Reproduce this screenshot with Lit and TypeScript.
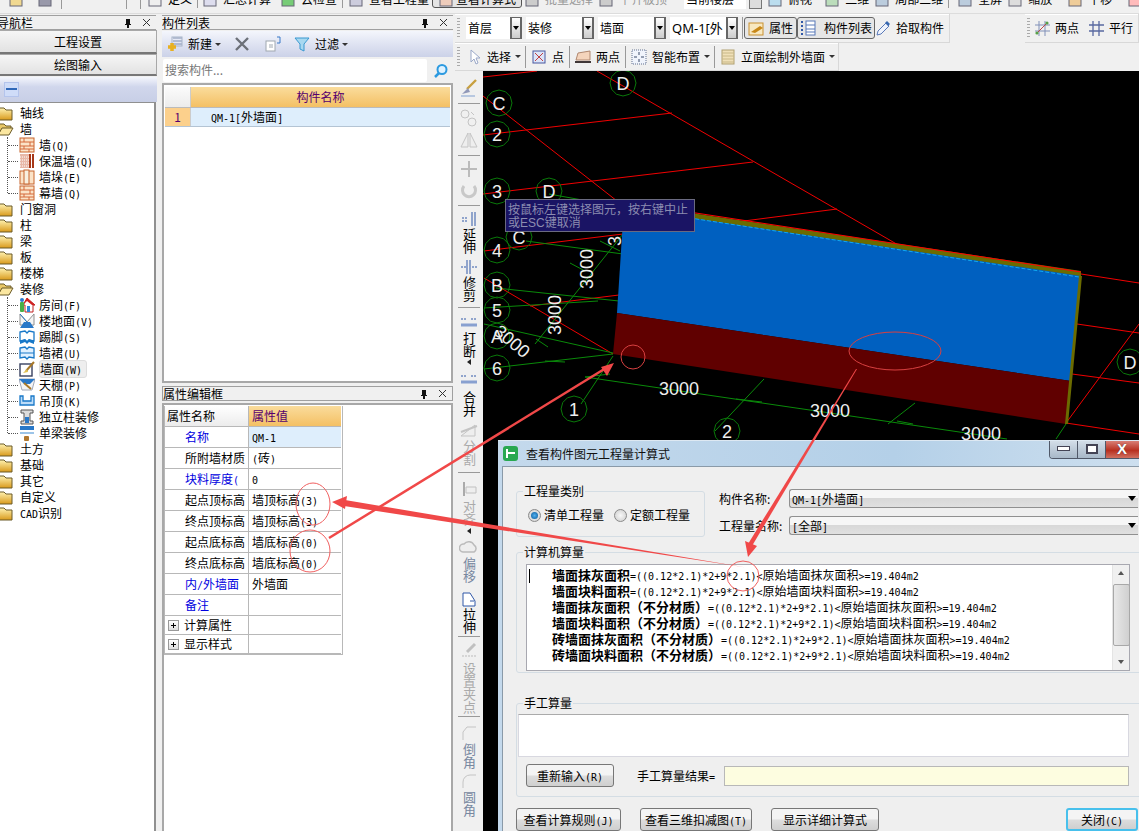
import { LitElement, html, css, svg } from 'lit';
import { customElement } from 'lit/decorators.js';

// latin runs are half width in the original bitmap font, so they get their own span
const mix = (s: string) =>
  s.split(/([\x20-\x7e]+)/).map((p, i) => (i % 2 ? html`<span class="lat">${p}</span>` : p));

const ic = (body: unknown, w = 16, h = 16) =>
  html`<svg class="ic" width=${w} height=${h} viewBox="0 0 16 16">${body}</svg>`;

const folder = ic(svg`<defs><linearGradient id="fg" x1="0" y1="0" x2="0" y2="1"><stop offset="0" stop-color="#fff2b0"/><stop offset="1" stop-color="#d99a1c"/></linearGradient></defs>
  <path d="M0 3h6l2 2h6v10H0z" fill="url(#fg)" stroke="#6b5a28"/>`);
const folderOpen = ic(svg`<path d="M0 3h6l2 2h5v3H4L0 14z" fill="#e8c868" stroke="#6b5a28"/><path d="M4 7h11l-4 7H0z" fill="#fbe7a0" stroke="#6b5a28"/>`);
const brick = ic(svg`<rect x="1" y="1" width="14" height="14" fill="#fbe3c8" stroke="#c8642c"/>
  <path d="M1 5h14M1 9h14M1 12h14M5 1v4M11 5v4M5 9v3M10 12v3" stroke="#d4693a" fill="none"/>`);
const icons: Record<string, unknown> = {
  brick,
  insul: ic(svg`<rect x="1" y="1" width="9" height="14" fill="#e8b8a8"/><path d="M1 4h9M1 7h9M1 10h9M1 13h9" stroke="#fff" stroke-dasharray="1 1"/><path d="M11 1v14M14 1v14" stroke="#a83818" stroke-width="2"/>`),
  pier: ic(svg`<rect x="1" y="2" width="14" height="13" fill="#fbe3c8" stroke="#c8642c"/><rect x="5" y="1" width="5" height="14" fill="#f8f0e0" stroke="#c8642c"/>`),
  room: ic(svg`<path d="M8 1L16 8h-2v7H6V8H4z" fill="#fff" stroke="#c02020"/><path d="M8 1L16 8H13L8 4 4 8z" fill="#d02020"/><rect x="1" y="5" width="4" height="10" rx="1" fill="#48b048"/><circle cx="3" cy="3" r="2" fill="#2878d0"/><rect x="8" y="9" width="3" height="6" fill="#3088d8"/>`),
  floor: ic(svg`<path d="M1 1l7 8 7-8v11H1z" fill="#f4f4f4" stroke="#909090"/><path d="M1 15l4-6h6l4 6z" fill="#2878c8"/><path d="M1 1l7 8" stroke="#2878c8"/>`),
  base: ic(svg`<path d="M1 3l5-1 2 2 2-2 5 1v9l-5-1-2 2-2-2-5 1z" fill="#fff" stroke="#1878c8" stroke-width="1.3"/><path d="M1 12l5-2 2 2 2-2 5 2v3l-5-2-2 2-2-2-5 2z" fill="#1878c8"/>`),
  dado: ic(svg`<path d="M1 3l5-1 2 2 2-2 5 1v10l-5-1-2 2-2-2-5 1z" fill="#e0f0ff" stroke="#1878c8" stroke-width="1.3"/><path d="M1 8h14" stroke="#1878c8"/>`),
  face: ic(svg`<rect x="1" y="3" width="12" height="12" fill="#fff" stroke="#384060" stroke-width="1.4"/><path d="M15 1L7 10" stroke="#a87828" stroke-width="2"/><path d="M8 8L4 12l5-1z" fill="#e0c050"/>`),
  ceil: ic(svg`<path d="M0 2h16l-3 11H3z" fill="#f4f4f4" stroke="#a0a8b8"/><path d="M0 2h16l-5 5H5z" fill="#2878c8"/><path d="M5 6l7 6" stroke="#a87828" stroke-width="2"/>`),
  hang: ic(svg`<path d="M1 3h3v5h8V3h3v9H1z" fill="#bcdcf8" stroke="#1878c8" stroke-width="1.3"/>`),
  col: ic(svg`<path d="M2 1h12v3h-3v8h3v3H2v-3h3V4H2z" fill="#dcdcdc" stroke="#555"/><rect x="6" y="8" width="4" height="6" fill="#2878c8"/>`),
  beam: ic(svg`<rect x="1" y="1" width="14" height="4" fill="#2878c8"/><rect x="1" y="7" width="14" height="2" fill="#9cc4e8"/><rect x="5" y="11" width="5" height="5" rx="1" fill="#b07830"/>`),
  plusDoc: ic(svg`<path d="M6 2h9M6 5h9M6 8h9" stroke="#8090b0" fill="none"/><rect x="5" y="1" width="10" height="9" fill="none" stroke="#a8b4c8"/><path d="M5 7v8M1 11h8" stroke="#e8b020" stroke-width="3.5"/>`),
  cross: ic(svg`<path d="M2 2l12 12M14 2L2 14" stroke="#6c7078" stroke-width="2.4"/>`),
  copy: ic(svg`<rect x="1" y="5" width="9" height="10" fill="#fff" stroke="#a0a8b0"/><path d="M4 9h4M4 11h4" stroke="#a0a8b0"/><path d="M12 1h3v6h-3" fill="none" stroke="#3878c8"/>`),
  filter: ic(svg`<path d="M1 2h14L10 8v7l-4-2V8z" fill="#a8d8f0" stroke="#3898d0"/>`),
  search: ic(svg`<circle cx="9" cy="6.5" r="4.5" fill="#dff2ff" stroke="#2c9ae0" stroke-width="2"/><path d="M6 10l-4 4" stroke="#2c9ae0" stroke-width="2.5"/>`),
  cursor: ic(svg`<path d="M5 1v12l3-3 2 5 2-1-2-5h4z" fill="#fff" stroke="#9aa8c8"/>`),
  point: ic(svg`<rect x="2" y="2" width="12" height="12" fill="#dce4f8" stroke="#4858a0"/><path d="M4 4l8 8M12 4l-8 8" stroke="#c04040"/>`),
  two: ic(svg`<path d="M3 4l12-2v9H1z" fill="#f4d4bc" stroke="#b08870"/><path d="M0 13h16" stroke="#403838" stroke-width="2"/>`),
  smart: ic(svg`<rect x="1" y="1" width="14" height="14" fill="#f0f4fc" stroke="#607090" stroke-dasharray="1 1"/><path d="M8 3v3M8 10v3M3 8h3M10 8h3" stroke="#384868"/>`),
  elev: ic(svg`<rect x="2" y="1" width="12" height="14" fill="#f0e0b8" stroke="#b0a070"/><path d="M2 4h12M2 7h12M2 10h12M2 13h12" stroke="#c8b888"/>`),
  attr: ic(svg`<rect x="1" y="3" width="14" height="12" fill="#f8e8c0" stroke="#c89030"/><path d="M3 12l9-6 3 2-8 5z" fill="#c88818"/>`),
  list: ic(svg`<path d="M1 2h2M1 6h2M1 10h2M1 14h2" stroke="#3058a8" stroke-width="2"/><rect x="6" y="1" width="9" height="14" fill="#fff" stroke="#5878b8"/><path d="M6 5h9M6 9h9M6 12h9" stroke="#5878b8"/>`),
  pick: ic(svg`<path d="M2 15l1-4 8-8 3 3-8 8z" fill="#f0f4fc" stroke="#5878b8"/><path d="M10 3l2-2 3 3-2 2z" fill="#3868b0"/>`),
  gridTwo: ic(svg`<path d="M5 1v15M11 1v15M1 5h15M1 11h15" stroke="#8090b8"/><path d="M2 14L14 2" stroke="#c04848"/><circle cx="3" cy="13" r="1.6" fill="#58a048"/><circle cx="13" cy="3" r="1.6" fill="#58a048"/>`),
  gridPar: ic(svg`<path d="M5 1v15M11 1v15M1 5h15M1 11h15" stroke="#5868a0" stroke-width="1.3"/>`),
};

const strip = (c: string) => ic(svg`<rect x="2" y="1" width="12" height="14" fill=${c} stroke="#667"/><path d="M4 8h8" stroke="#fff"/>`);

// top strip is cut by the window edge: [left margin, icon colour, text, class]
const topItems: [number, string, string, string][] = [
  [6, '#eee', '定义', 'bar'],
  [4, '#dde', '汇总计算', ''],
  [9, '#7c7', '云检查', 'bar'],
  [5, '#ccd', '查看工程量', ''],
  [3, '#ecb', '查看计算式', 'on'],
  [2, '#ccc', '批量选择', 'dim'],
  [5, '#ccc', '平齐板顶', 'dim'],
];
const topRight: [number, string, string, string][] = [
  [5, '#bde', '俯视', ''],
  [12, '#bdb', '二维', ''],
  [5, '#bcd', '局部三维', 'bar'],
  [8, '#bcd', '全屏', ''],
  [5, '#ddd', '缩放', ''],
  [15, '#ec9', '平移', ''],
];

type TreeNode = { t: string; open?: boolean; kids?: [string, string, boolean?][] };
const tree: TreeNode[] = [
  { t: '轴线' },
  { t: '墙', open: true, kids: [['brick', '墙(Q)'], ['insul', '保温墙(Q)'], ['pier', '墙垛(E)'], ['brick', '幕墙(Q)']] },
  { t: '门窗洞' }, { t: '柱' }, { t: '梁' }, { t: '板' }, { t: '楼梯' },
  { t: '装修', open: true, kids: [['room', '房间(F)'], ['floor', '楼地面(V)'], ['base', '踢脚(S)'], ['dado', '墙裙(U)'], ['face', '墙面(W)', true], ['ceil', '天棚(P)'], ['hang', '吊顶(K)'], ['col', '独立柱装修'], ['beam', '单梁装修']] },
  { t: '土方' }, { t: '基础' }, { t: '其它' }, { t: '自定义' }, { t: 'CAD识别' },
];

const props: [string, string, string, string][] = [
  ['名称', 'QM-1', 'blue', 'sel'],
  ['所附墙材质', '(砖)', '', ''],
  ['块料厚度(', '0', 'blue', ''],
  ['起点顶标高', '墙顶标高(3)', '', ''],
  ['终点顶标高', '墙顶标高(3)', '', ''],
  ['起点底标高', '墙底标高(0)', '', ''],
  ['终点底标高', '墙底标高(0)', '', ''],
  ['内/外墙面', '外墙面', 'blue', ''],
  ['备注', '', 'blue', ''],
];

const noMat = '\uFF08不分材质\uFF09';
const formulas: [string, string][] = [
  ['墙面抹灰面积', '墙面抹灰面积'],
  ['墙面块料面积', '墙面块料面积'],
  ['墙面抹灰面积' + noMat, '墙面抹灰面积'],
  ['墙面块料面积' + noMat, '墙面块料面积'],
  ['砖墙面抹灰面积' + noMat, '墙面抹灰面积'],
  ['砖墙面块料面积' + noMat, '墙面块料面积'],
];

const g = (d: unknown) => html`<svg class="ic" width="20" height="20" viewBox="0 0 20 20">${d}</svg>`;
// side toolbar, top to bottom: [height, kind, icon or text, tone]
const side: [number, string, unknown, string?][] = [
  [6, 'gap', null],
  [22, 'icon', g(svg`<path d="M17 2L8 11" stroke="#c8a040" stroke-width="2.4"/><path d="M9 10l-6 6 8-2z" fill="#9098b8"/><path d="M2 18h14" stroke="#80a0d0"/>`)],
  [8, 'sep', null],
  [22, 'icon', g(svg`<circle cx="6" cy="6" r="4" fill="none" stroke="#c4c4c4"/><circle cx="13" cy="14" r="4" fill="none" stroke="#c4c4c4"/><path d="M12 4l3 3" stroke="#c4c4c4"/>`)],
  [22, 'icon', g(svg`<path d="M9 3v14H2zM11 3v14h7z" fill="#eee" stroke="#c4c4c4"/>`)],
  [8, 'sep', null],
  [20, 'icon', g(svg`<path d="M10 2v16M2 10h16" stroke="#bbb" stroke-width="2"/>`)],
  [22, 'icon', g(svg`<path d="M15 6a6.500 6.500 0 1 1-10 0" fill="none" stroke="#c8c8c8" stroke-width="3"/>`)],
  [8, 'sep', null],
  [19, 'icon', g(svg`<path d="M3 9h6M3 12h6" stroke="#3058a8" stroke-dasharray="2 1"/><path d="M13 3v14M16 3v14" stroke="#3058a8"/>`)],
  [27, 'text', '延伸'],
  [3, 'gap', null],
  [18, 'icon', g(svg`<path d="M8 3v14M11 3v14" stroke="#3058a8"/><path d="M2 10h6M13 10h5" stroke="#3058a8" stroke-dasharray="2 1"/>`)],
  [27, 'text', '修剪'],
  [9, 'sep', null],
  [20, 'icon', g(svg`<path d="M2 7h5M12 7h6" stroke="#3058a8" stroke-dasharray="2 1"/><path d="M2 13h16" stroke="#88a0d0" stroke-width="3"/>`)],
  [27, 'text', '打断'],
  [8, 'arr', null],
  [24, 'icon', g(svg`<path d="M2 7h5M12 7h6" stroke="#3058a8" stroke-dasharray="2 1"/><path d="M2 13h16" stroke="#88a0d0" stroke-width="3"/>`)],
  [27, 'text', '合并'],
  [4, 'gap', null],
  [18, 'icon', g(svg`<path d="M2 15h14V4z" fill="#eee" stroke="#c4c4c4"/><path d="M2 11L18 5" stroke="#c4c4c4" stroke-width="2"/>`)],
  [27, 'text', '分割', 'dim'],
  [10, 'sep', null],
  [23, 'icon', g(svg`<path d="M5 3v14" stroke="#aaa" stroke-width="2"/><path d="M7 8h10v6H7z" fill="#eee" stroke="#c0c0c0"/>`)],
  [28, 'text', '对齐', 'dim'],
  [11, 'arr', null],
  [18, 'icon', g(svg`<path d="M4 14a4 4 0 0 1 1-8 6 6 0 0 1 10 1 4 4 0 0 1 0 7z" fill="#eee" stroke="#bbb" stroke-width="1.500"/>`)],
  [27, 'text', '偏移', 'soft'],
  [8, 'gap', null],
  [16, 'icon', g(svg`<path d="M4 3h7l5 8v5H4z" fill="#fff" stroke="#3058a8"/><path d="M11 11h4" stroke="#3058a8"/>`)],
  [26, 'text', '拉伸'],
  [5, 'sep', null],
  [23, 'icon', g(svg`<path d="M16 3L8 11" stroke="#c0c0c0" stroke-width="3"/><path d="M3 15h14" stroke="#bbb" stroke-dasharray="2 1"/>`)],
  [51, 'text', '设置夹点', 'dim'],
  [7, 'sep', null],
  [23, 'icon', g(svg`<path d="M17 5H8L4 10v8" fill="none" stroke="#c4c4c4"/>`)],
  [26, 'text', '倒角', 'soft'],
  [22, 'icon', g(svg`<path d="M17 5h-6a7 7 0 0 0-7 7v6" fill="none" stroke="#c4c4c4"/>`)],
  [30, 'text', '圆角', 'soft'],
];

const bubble = (x: number, y: number, s: string, r = 13) => svg`
  <polygon points=${[...Array(12).keys()].map((i) => {
    const a = (i * Math.PI) / 6;
    return `${x + r * Math.cos(a)},${y + r * Math.sin(a)}`;
  }).join(' ')} fill="none" stroke="#0a7a0a"/>
  <text x=${x} y=${y + 6.500} class="cad" text-anchor="middle">${s}</text>`;

const redLines = [
  [483, 76, 537, 70], [597, 70, 900, 245], [483, 95, 640, 218], [483, 134, 672, 112],
  [483, 193, 753, 161], [736, 221, 837, 208], [484, 250, 623, 233], [530, 305, 619, 294],
  [484, 277, 613, 353], [1081, 273, 1139, 282], [1077, 323, 1139, 332], [1072, 373, 1139, 382],
  [1066, 422, 1139, 433], [1066, 422, 1139, 323],
];
const greenLines = [
  [549, 193, 610, 204], [526, 240, 623, 253], [496, 287, 619, 300], [484, 307, 598, 300],
  [484, 323, 613, 352], [484, 368, 613, 353], [585, 376, 1007, 438], [535, 343, 623, 233],
  [581, 403, 613, 355], [715, 430, 764, 378], [888, 423, 915, 402], [1056, 438, 1066, 423],
];
const ticks = [
  [585, 376, 610, 373], [736, 398, 762, 401], [897, 420, 913, 423], [536, 338, 548, 346],
  [545, 360, 565, 361], [570, 262, 585, 270], [600, 240, 620, 250],
];

@customElement('app-root')
export class AppRoot extends LitElement {
  static styles = css`
    :host {
      display: block;
      position: relative;
      width: 1139px;
      height: 831px;
      overflow: hidden;
      background: #f0f0f0;
      font: 12px/16px "Noto Sans CJK SC", "Liberation Sans", sans-serif;
      color: #000;
    }
    .lat { font: 10px/1 "DejaVu Sans Mono", "Liberation Mono", monospace; }
    .ic { display: block; flex: none; }

    /* window-cut toolbar at the very top */
    .top { display: flex; height: 13px; overflow: hidden; border-bottom: 1px solid #dcdcdc; }
    .top-item { display: flex; flex: none; gap: 5px; margin-top: -11px; height: 19px; align-items: center; white-space: nowrap; box-sizing: border-box; }
    .top-item.dim { color: #999; }
    .top-item.bar { padding-right: 5px; border-right: 1px solid #999; }
    .top-item.on { border: 1px solid #555; border-radius: 3px; background: #e4e4e4; padding: 0 5px; gap: 2px; }
    .top-sep { width: 1px; height: 9px; background: #999; flex: none; }
    .gap-a { margin-left: 8px; }
    .gap-b { margin-left: 64px; }
    .gap-c { margin-left: 13px; }
    .top-combo { width: 62px; height: 9px; background: #fff; margin-left: 17px; flex: none; overflow: hidden; }
    .top-combo span { display: block; margin-top: -9px; padding-left: 2px; }
    .top-arrow { width: 11px; height: 8px; margin-left: 3px; background: #ddd; border: 1px solid #777; border-top: 0; flex: none; }

    .main { display: flex; height: 817px; }

    .title {
      display: flex; align-items: center; height: 13px;
      border: 1px solid #a0a0a0; border-width: 1px 0;
      background: #f0f0f0; white-space: nowrap;
    }
    .title span { flex: 1; }
    .title .pin { flex: none; width: 10px; height: 10px; margin-right: 9px; }
    .title .x { flex: none; width: 9px; height: 9px; margin-right: 5px; }

    /* navigation column */
    .nav { width: 156px; display: flex; flex-direction: column; flex: none; margin-top: 1px; }
    .nav .title { margin-left: -1px; text-indent: -2px; }
    .nav-btn {
      height: 21px; line-height: 21px; text-align: center;
      background: linear-gradient(#f6f6f6, #e2e2e2);
      border: 1px solid #a8a8a8; border-left: 0; border-bottom: 2px solid #777;
      margin-right: -1px;
    }
    .nav-btn + .nav-btn { height: 19px; line-height: 19px; }
    .nav-tool {
      height: 25px; margin-top: 1px; display: flex; align-items: center; padding-left: 4px;
      background: linear-gradient(#f4f6fc 0, #d0d6ec 40%, #c8cfe6 100%);
      margin-right: -1px;
    }
    .nav-tool i { display: block; width: 13px; height: 13px; background: #cfdcf8; border: 1px solid #b4c4ec; position: relative; }
    .nav-tool i::after { content: ""; position: absolute; left: 1px; right: 1px; top: 5px; height: 2px; background: #3068b8; }
    .tree { flex: 1; background: #fff; border: 1px solid #909090; border-width: 1px 2px 0 0; padding-top: 2px; }
    .row { display: flex; align-items: center; height: 16px; gap: 6px; white-space: nowrap; }
    .row .ic { margin-left: -2px; }
    .kids { position: relative; padding-left: 19px; }
    .kids::before { content: ""; position: absolute; left: 7px; top: 0; bottom: 8px; border-left: 1px dotted #555; }
    .kid { position: relative; display: flex; align-items: center; height: 16px; gap: 4px; white-space: nowrap; }
    .kid::before { content: ""; position: absolute; left: -11px; width: 10px; top: 8px; border-top: 1px dotted #555; }
    .kid b { font-weight: 400; }
    .kid.hl b { background: #eee; border: 1px solid #ddd; border-radius: 3px; padding: 0 4px 0 0; margin: -1px 0; }

    /* component list + property column */
    .mid { width: 291px; margin-left: 6px; flex: none; display: flex; flex-direction: column; margin-top: 1px; }
    .mid-tool {
      height: 26px; margin-top: 1px; display: flex; align-items: center; padding-left: 5px; gap: 5px;
      background: linear-gradient(#f4f6fc 0, #dfe3f2 50%, #ccd2e8 100%);
    }
    .drop { width: 0; height: 0; border: 3px solid transparent; border-top: 3px solid #333; border-bottom: 0; margin-left: -2px; }
    .search { display: flex; height: 25px; margin-top: 1px; align-items: center; border-bottom: 1px solid #aaa; }
    .search div { width: 264px; height: 23px; line-height: 22px; background: #fff; border-radius: 2px; color: #777; padding-left: 2px; box-sizing: border-box; margin-left: 1px; }
    .search svg { margin-left: 6px; }
    .list { height: 299px; background: #fff; border: 2px solid #a8a8a8; border-top: 1px solid #a8a8a8; padding: 2px 1px 0; box-sizing: border-box; }
    .list-head { display: flex; height: 20px; line-height: 20px; border-bottom: 1px solid #bbb; }
    .list-head i { width: 25px; background: linear-gradient(#fbfbfb, #ececec); border-right: 1px solid #ccc; }
    .list-head b { flex: 1; font-weight: 400; text-align: center; color: #56006e; background: linear-gradient(#fadc9c, #f4c064); }
    .list-row { display: flex; height: 18px; line-height: 18px; border-bottom: 1px solid #b4c4d4; }
    .list-row i { width: 25px; font-style: normal; text-align: center; background: #fcd08c; color: #56006e; border-right: 1px solid #ccc; }
    .list-row b { flex: 1; font-weight: 400; background: #deeefc; padding-left: 20px; }
    .mid .prop-title { margin-top: 3px; border: 1px solid #a0a0a0; }
    .prop { flex: 1; margin-top: 2px; background: #fff; border: 2px solid #a8a8a8; border-bottom: 0; padding-top: 1px; }
    .grid { display: grid; grid-template-columns: 84px 93px; width: 178px; border: 1px solid #b8b8b8; border-width: 0 1px 1px 0; }
    .cell { height: 20px; line-height: 20px; border: 1px solid #b8b8b8; border-width: 0 0 1px 1px; white-space: nowrap; overflow: hidden; padding-left: 20px; }
    .cell.v { padding-left: 3px; }
    .cell.h { padding-left: 2px; background: linear-gradient(#fff, #ececec); }
    .cell.hv { padding-left: 3px; background: linear-gradient(#fadc9c, #f4c064); color: #56006e; }
    .cell.blue { color: #0000e0; }
    .cell.sel { background: #deeefc; }
    .cell.fold { height: 18px; line-height: 18px; display: flex; align-items: center; padding-left: 3px; gap: 5px; }
    .plus { width: 9px; height: 9px; border: 1px solid #999; background: linear-gradient(#fff, #ddd); position: relative; }
    .plus::before { content: ""; position: absolute; left: 2px; right: 2px; top: 4px; height: 1px; background: #000; }
    .plus::after { content: ""; position: absolute; top: 2px; bottom: 2px; left: 4px; width: 1px; background: #000; }

    /* drawing side */
    .work { flex: 1; margin-left: 2px; display: flex; flex-direction: column; min-width: 0; }
    .bars { display: flex; height: 29px; }
    .band { display: flex; align-items: center; background: #f0f0f0; border: 1px solid #d8d8d8; border-width: 0 1px 1px 0; box-shadow: inset 0 1px 0 #fff; height: 28px; flex: none; }
    .grip { width: 3px; height: 20px; margin: 0 6px 0 2px; background: repeating-linear-gradient(#aaa 0 1px, transparent 1px 3px); flex: none; }
    .combo { display: flex; height: 22px; margin-right: 4px; flex: none; }
    .combo span { background: #fff; line-height: 22px; padding-left: 2px; box-sizing: border-box; white-space: nowrap; overflow: hidden; }
    .combo i { width: 12px; box-sizing: border-box; border: 1px solid #666; border-width: 1px 2px; background: linear-gradient(#fff, #ccc); display: flex; align-items: center; justify-content: center; }
    .combo i::after { content: ""; border: 3px solid transparent; border-top: 4px solid #000; border-bottom: 0; }
    .w44 { width: 44px; }
    .w56 { width: 56px; }
    .qm { font: 13px/22px "Noto Sans", "Noto Sans CJK SC", sans-serif; }
    .vsep { width: 1px; height: 22px; background: #999; flex: none; }
    .vsep.wide { margin-right: 1px; }
    .press { display: flex; align-items: center; gap: 5px; height: 20px; padding: 0 3px; border: 1px solid #666; border-radius: 3px; background: #e6e6e6; flex: none; }
    .press + .press { padding: 0 2px; gap: 8px; }
    .plain { display: flex; align-items: center; gap: 5px; flex: none; white-space: nowrap; }
    .pick-item { margin: 0 5px 0 0; }
    .par-band { margin-left: 75px; flex: 1; }
    .par-band .grip { margin-right: 3px; }
    .par-first { margin: 0 9px 0 1px; }
    .band2 { height: 27px; width: 383px; }
    .band2 .grip { margin-right: 1px; }
    .band2 .plain { padding: 0 5px; }
    .band2 .plain .drop { margin: 0 -1px 0 -1px; }

    .below { flex: 1; display: flex; min-height: 0; }
    .vbar { width: 28px; flex: none; display: flex; flex-direction: column; align-items: center; background: #f0f0f0; overflow: hidden; }
    .vbar > * { flex: none; }
    .v-icon { display: flex; align-items: center; justify-content: center; width: 100%; }
    .v-sep { display: flex; align-items: center; width: 22px; }
    .v-sep::after { content: ""; flex: 1; height: 1px; background: #999; }
    .v-text { writing-mode: vertical-rl; text-orientation: upright; font-size: 13px; line-height: 14px; white-space: nowrap; }
    .v-text.dim { color: #aaa; }
    .v-text.soft { color: #7888a0; }
    .v-arr { display: flex; justify-content: center; }
    .v-arr::after { content: ""; border: 3px solid transparent; border-right: 4px solid #222; border-left: 0; height: 0; }
    .canvas { flex: 1; background: #000; position: relative; overflow: hidden; }
    .canvas svg { display: block; }
    .cad { font: 18px "Liberation Sans", sans-serif; fill: #eee; }
    .tip {
      position: absolute; left: 22px; top: 128px; width: 186px; height: 29px;
      background: #1a1464; border: 1px solid #6a6a80; color: #8c8cb0;
      line-height: 13px; padding: 2px 0 0 2px; white-space: nowrap;
    }
    .tip .lat { font: 12px/1 "Liberation Sans", sans-serif; }

    /* dialog floating over the canvas */
    .dialog {
      position: absolute; left: 498px; top: 440px; width: 660px; height: 391px;
      background: linear-gradient(90deg, #c4d9ec, #b4d0e8 60%, #cfe0ef);
      border-top: 1px solid #dde8f2; box-sizing: border-box; overflow: hidden;
    }
    .dlg-top { display: flex; align-items: center; height: 25px; padding-left: 5px; gap: 8px; color: #111; }
    .dlg-logo { width: 15px; height: 15px; border-radius: 3px; background: #28a850; position: relative; flex: none; }
    .dlg-logo::before { content: ""; position: absolute; left: 3px; top: 3px; bottom: 3px; width: 2px; background: #fff; }
    .dlg-logo::after { content: ""; position: absolute; left: 5px; right: 3px; top: 6px; height: 2px; background: #fff; }
    .winbtns { position: absolute; top: -2px; left: 551px; display: flex; height: 19px; border: 1px solid #505868; border-top: 0; border-radius: 0 0 0 4px; overflow: hidden; }
    .winbtns div { display: flex; align-items: center; justify-content: center; background: linear-gradient(#d8e2ec, #a8b8c8); border-right: 1px solid #505868; width: 27px; }
    .winbtns div:nth-child(3) { width: 50px; justify-content: flex-start; padding-left: 11px; box-sizing: border-box; background: linear-gradient(#e09088, #b83020 60%, #d07060); border: 0; }
    .winbtns em { font: 700 15px/1 "Liberation Sans", sans-serif; color: #fff; text-shadow: 0 0 1px #333; }
    .min { width: 11px; height: 3px; background: #fff; border: 1px solid #445; }
    .max { width: 8px; height: 6px; background: #fff; border: 2px solid #445; }
    .dlg-body { margin-left: 4px; height: 366px; background: #efefef; border: 1px solid #8a9aa8; border-width: 1px 0 0 1px; box-sizing: border-box; padding: 24px 0 0 13px; }
    .r1 { display: flex; height: 46px; }
    .group { border: 1px solid #d4dde4; border-radius: 3px; box-sizing: border-box; }
    .legend { display: block; width: fit-content; background: #efefef; margin: -8px 0 0 6px; padding: 0 1px; line-height: 14px; }
    .kind { width: 189px; flex: none; }
    .radios { display: flex; align-items: center; margin: 9px 0 0 11px; white-space: nowrap; }
    .radio { width: 11px; height: 11px; border-radius: 50%; border: 1px solid #8a8a8a; background: radial-gradient(#f8f8f8, #ccc); margin-right: 3px; position: relative; flex: none; }
    .radio.on::after { content: ""; position: absolute; inset: 2px; border-radius: 50%; background: radial-gradient(#50b0f0, #085898); }
    .radios span + .radio { margin-left: 10px; }
    .fields { margin-left: 14px; flex: none; width: 470px; margin-top: -2px; }
    .field { display: flex; align-items: center; height: 19px; margin-bottom: 8px; white-space: nowrap; }
    .field label { width: 70px; flex: none; }
    .sel-box { display: flex; align-items: center; justify-content: space-between; width: 349px; height: 19px; line-height: 18px; padding: 0 2px; box-sizing: border-box; border: 1px solid #909090; border-right: 0; border-radius: 3px 0 0 3px; background: linear-gradient(#f6f6f6 45%, #d8d8d8 50%, #e0e0e0); }
    .sel-box::after { content: ""; border: 4px solid transparent; border-top: 5px solid #000; border-bottom: 0; }
    .calc { margin-top: 15px; height: 121px; width: 660px; }
    .textbox { display: flex; width: 604px; height: 107px; margin: 5px 0 0 9px; background: #fff; border: 1px solid #a8a8b0; box-sizing: border-box; position: relative; }
    .lines { flex: 1; padding: 2px 0 0 25px; white-space: nowrap; }
    .lines div { height: 16px; line-height: 16px; }
    .lines b { font-size: 13px; font-weight: 700; }
    .caret { position: absolute; left: 2px; top: 4px; width: 1px; height: 14px; background: #000; }
    .scroll { width: 17px; flex: none; background: #f0f0f0; border-left: 1px solid #e4e4e4; display: flex; flex-direction: column; align-items: center; justify-content: space-between; padding: 6px 0; box-sizing: border-box; position: relative; }
    .scroll i { border: 3px solid transparent; }
    .scroll i.up { border-bottom: 4px solid #555; border-top: 0; }
    .scroll i.dn { border-top: 4px solid #555; border-bottom: 0; }
    .thumb { position: absolute; top: 19px; left: 0; width: 15px; height: 60px; background: linear-gradient(90deg, #e8e8e8, #d0d0d0); border: 1px solid #a8a8a8; border-radius: 2px; }
    .manual { margin-top: 30px; height: 94px; width: 660px; }
    .manual .area { width: 611px; height: 43px; margin: 4px 0 0 1px; background: #fff; border: 1px solid #d8d8e0; border-top-color: #aaa; box-sizing: border-box; }
    .manual .foot { display: flex; align-items: center; margin: 7px 0 0 9px; }
    .btn { height: 23px; line-height: 21px; box-sizing: border-box; text-align: center; border: 1px solid #777; border-radius: 3px; background: linear-gradient(#f4f4f4 45%, #dcdcdc 55%, #cfcfcf); white-space: nowrap; flex: none; }
    .btn.go { border: 2px solid #48c0ec; line-height: 19px; }
    .foot > span { margin-left: 23px; }
    .foot u { display: block; width: 405px; height: 20px; background: #fdfde0; border: 1px solid #b8b8b8; box-sizing: border-box; margin-left: 9px; text-decoration: none; }
    .btm { display: flex; margin-top: 11px; }
    .b88 { width: 88px; }
    .b105 { width: 105px; }
    .b112 { width: 112px; margin-left: 19px; }
    .b108 { width: 108px; margin-left: 19px; }
    .b72 { width: 72px; margin-left: 187px; }

    .notes { position: absolute; left: 0; top: 0; pointer-events: none; }
  `;

  private renderTop() {
    return html`<div class="top">
      <div class="top-item"><span class="gap-a">${strip('#f0d890')}</span></div>
      <div class="top-item"><span class="gap-c">${strip('#99a')}</span></div>
      <div class="top-sep gap-a"></div>
      <div class="top-sep gap-b"></div>
      <div class="top-sep gap-c"></div>
      ${topItems.map(
        ([m, c, t, cls]) => html`<div class="top-item ${cls}" style="margin-left:${m}px">${strip(c)}<span>${t}</span></div>`
      )}
      <div class="top-combo"><span>当前楼层</span></div>
      <div class="top-arrow"></div>
      ${topRight.map(
        ([m, c, t, cls]) => html`<div class="top-item ${cls}" style="margin-left:${m}px">${strip(c)}<span>${t}</span></div>`
      )}
      <div class="top-item" style="margin-left:15px">${strip('#fbb')}</div>
    </div>`;
  }

  private renderTree() {
    return html`<div class="tree">
      ${tree.map(
        (n) => html`<div class="row">${n.open ? folderOpen : folder}<span>${mix(n.t)}</span></div>
          ${n.kids
            ? html`<div class="kids">
                ${n.kids.map(
                  ([i, t, hl]) => html`<div class="kid ${hl ? 'hl' : ''}">${icons[i]}<b>${mix(t)}</b></div>`
                )}
              </div>`
            : ''}`
      )}
    </div>`;
  }

  private titleBar(t: string, cls = '') {
    return html`<div class="title ${cls}">
      <span>${t}</span>
      <svg class="pin" viewBox="0 0 10 10"><path d="M3 1h4v5h1v1H6v3H4V7H2V6h1z" fill="#111"/></svg>
      <svg class="x" viewBox="0 0 9 9"><path d="M1 1l7 7M8 1L1 8" stroke="#333"/></svg>
    </div>`;
  }

  private renderSide() {
    return html`<div class="vbar">
      ${side.map(([h, kind, v, tone]) => {
        if (kind === 'icon') return html`<div class="v-icon" style="height:${h}px">${v}</div>`;
        if (kind === 'sep') return html`<div class="v-sep" style="height:${h}px"></div>`;
        if (kind === 'arr') return html`<div class="v-arr" style="height:${h}px"></div>`;
        if (kind === 'text') return html`<div class="v-text ${tone ?? ''}" style="height:${h}px">${v}</div>`;
        return html`<div style="height:${h}px"></div>`;
      })}
    </div>`;
  }

  private renderCad() {
    const line = (l: number[]) => svg`<line x1=${l[0]} y1=${l[1]} x2=${l[2]} y2=${l[3]} />`;
    return html`<div class="canvas">
      <svg width="656" height="761" viewBox="483 70 656 761">
        <g stroke="#f00000" stroke-width="1">${redLines.map(line)}</g>
        <g stroke="#0a8a0a" stroke-width="1">${greenLines.map(line)}${ticks.map(line)}</g>
        <polygon points="624,204 1081,273 1071,380 617,312" fill="#0060c0" />
        <polygon points="617,312 1071,380 1066,423 613,353" fill="#600000" />
        <polygon points="624,202 1081,270 1081,275 624,207" fill="#6b6b00" />
        <line x1="624" y1="201" x2="1081" y2="271" stroke="#f00" />
        <line x1="624" y1="207" x2="1079" y2="276" stroke="#10a8f0" stroke-dasharray="4 2" />
        <polygon points="1079,275 1082,275 1068,423 1065,423" fill="#6b6b00" />
        ${bubble(623, 82, 'D')} ${bubble(499, 102, 'C')} ${bubble(497, 133, '2')} ${bubble(497, 190, '3')}
        ${bubble(549, 190, 'D')} ${bubble(519, 236, 'C')} ${bubble(497, 249, '4')} ${bubble(497, 284, 'B')}
        ${bubble(497, 309, '5')} ${bubble(497, 335, 'A')} ${bubble(497, 367, '6')} ${bubble(574, 408, '1')}
        ${bubble(727, 430, '2')} ${bubble(1130, 361, 'D')}
        <text class="cad" x="679" y="394" text-anchor="middle">3000</text>
        <text class="cad" x="830" y="416" text-anchor="middle">3000</text>
        <text class="cad" x="981" y="439" text-anchor="middle">3000</text>
        <text class="cad" text-anchor="middle" transform="translate(593,268) rotate(-90)">3000</text>
        <text class="cad" text-anchor="middle" transform="translate(561,314) rotate(-90)">3000</text>
        <text class="cad" text-anchor="middle" transform="translate(508,345) rotate(40)">3000</text>
        <text class="cad" text-anchor="middle" transform="translate(621,240) rotate(-90)">3</text>
      </svg>
      <div class="tip">按鼠标左键选择图元\uFF0C按右键中止<br />或<span class="lat">ESC</span>键取消</div>
    </div>`;
  }

  private renderDialog() {
    return html`<div class="dialog">
      <div class="dlg-top"><div class="dlg-logo"></div>查看构件图元工程量计算式</div>
      <div class="winbtns">
        <div><i class="min"></i></div>
        <div><i class="max"></i></div>
        <div><em>X</em></div>
      </div>
      <div class="dlg-body">
        <div class="r1">
          <div class="group kind">
            <span class="legend">工程量类别</span>
            <div class="radios">
              <i class="radio on"></i><span>清单工程量</span>
              <i class="radio"></i><span>定额工程量</span>
            </div>
          </div>
          <div class="fields">
            <div class="field"><label>构件名称:</label><div class="sel-box"><span>${mix('QM-1[外墙面]')}</span></div></div>
            <div class="field"><label>工程量名称:</label><div class="sel-box"><span>${mix('[全部]')}</span></div></div>
          </div>
        </div>
        <div class="group calc">
          <span class="legend">计算机算量</span>
          <div class="textbox">
            <i class="caret"></i>
            <div class="lines">
              ${formulas.map(
                ([a, b]) => html`<div><b>${a}</b>${mix(`=((0.12*2.1)*2+9*2.1)<原始${b}>=19.404m2`)}</div>`
              )}
            </div>
            <div class="scroll"><i class="up"></i><div class="thumb"></div><i class="dn"></i></div>
          </div>
        </div>
        <div class="group manual">
          <span class="legend">手工算量</span>
          <div class="area"></div>
          <div class="foot">
            <div class="btn b88">${mix('重新输入(R)')}</div>
            <span>${mix('手工算量结果=')}</span>
            <u></u>
          </div>
        </div>
        <div class="btm">
          <div class="btn b105">${mix('查看计算规则(J)')}</div>
          <div class="btn b112">${mix('查看三维扣减图(T)')}</div>
          <div class="btn b108">显示详细计算式</div>
          <div class="btn go b72">${mix('关闭(C)')}</div>
        </div>
      </div>
    </div>`;
  }

  render() {
    return html`
      ${this.renderTop()}
      <div class="main">
        <div class="nav">
          ${this.titleBar('导航栏')}
          <div class="nav-btn">工程设置</div>
          <div class="nav-btn">绘图输入</div>
          <div class="nav-tool"><i></i></div>
          ${this.renderTree()}
        </div>
        <div class="mid">
          ${this.titleBar('构件列表')}
          <div class="mid-tool">
            ${icons.plusDoc}<span>新建</span><i class="drop"></i>
            <span style="width:3px"></span>${icons.cross}<span style="width:5px"></span>${icons.copy}
            <span style="width:3px"></span>${icons.filter}<span>过滤</span><i class="drop"></i>
          </div>
          <div class="search"><div>搜索构件...</div>${icons.search}</div>
          <div class="list">
            <div class="list-head"><i></i><b>构件名称</b></div>
            <div class="list-row"><i>1</i><b>${mix('QM-1[外墙面]')}</b></div>
          </div>
          ${this.titleBar('属性编辑框', 'prop-title')}
          <div class="prop">
            <div class="grid">
              <div class="cell h">属性名称</div>
              <div class="cell hv">属性值</div>
              ${props.map(
                ([k, v, c, s]) => html`<div class="cell ${c}">${mix(k)}</div>
                  <div class="cell v ${s}">${mix(v)}</div>`
              )}
              <div class="cell fold"><i class="plus"></i>计算属性</div><div class="cell fold"></div>
              <div class="cell fold"><i class="plus"></i>显示样式</div><div class="cell fold"></div>
            </div>
          </div>
        </div>
        <div class="work">
          <div class="bars">
            <div class="band">
              <i class="grip"></i>
              <div class="combo"><span class="w44">首层</span><i></i></div>
              <div class="combo"><span class="w56">装修</span><i></i></div>
              <div class="combo"><span class="w56">墙面</span><i></i></div>
              <div class="combo"><span class="qm w56">QM-1[外</span><i></i></div>
              <i class="vsep wide"></i>
              <div class="press">${icons.attr}<span>属性</span></div>
              <div class="press">${icons.list}<span>构件列表</span></div>
              <div class="plain pick-item">${icons.pick}<span>拾取构件</span></div>
            </div>
            <div class="band par-band">
              <i class="grip"></i>
              <div class="plain par-first">${icons.gridTwo}<span>两点</span></div>
              <div class="plain">${icons.gridPar}<span>平行</span></div>
            </div>
          </div>
          <div class="band band2">
            <i class="grip"></i>
            <div class="plain">${icons.cursor}<span>选择</span><i class="drop"></i></div>
            <i class="vsep"></i>
            <div class="plain">${icons.point}<span>点</span></div>
            <i class="vsep"></i>
            <div class="plain">${icons.two}<span>两点</span></div>
            <i class="vsep"></i>
            <div class="plain">${icons.smart}<span>智能布置</span><i class="drop"></i></div>
            <i class="vsep"></i>
            <div class="plain">${icons.elev}<span>立面绘制外墙面</span><i class="drop"></i></div>
          </div>
          <div class="below">
            ${this.renderSide()}
            ${this.renderCad()}
          </div>
        </div>
      </div>
      ${this.renderDialog()}
      <svg class="notes" width="1139" height="831" viewBox="0 0 1139 831" fill="none">
        <ellipse cx="313" cy="504" rx="17" ry="21" stroke="#f06060" />
        <ellipse cx="310" cy="551" rx="20" ry="21" stroke="#f06060" />
        <ellipse cx="743" cy="576" rx="16" ry="15" stroke="#f06060" />
        <ellipse cx="895" cy="351" rx="46" ry="19" stroke="#d84040" />
        <circle cx="633" cy="357" r="12" stroke="#d84040" />
        <polygon points="746,567.500 345,500 344,506" fill="#f04848" />
        <polygon points="332,502 347,496 345,509" fill="#f04848" />
        <line x1="329" y1="538" x2="606" y2="368" stroke="#f04848" stroke-width="2.500" />
        <polygon points="614,363 601,367 607,376" fill="#f04848" />
        <polygon points="856,369 857,369 752,546 748,544" fill="#f04848" />
        <polygon points="748,557 745,541 757,546" fill="#f04848" />
      </svg>
    `;
  }
}
